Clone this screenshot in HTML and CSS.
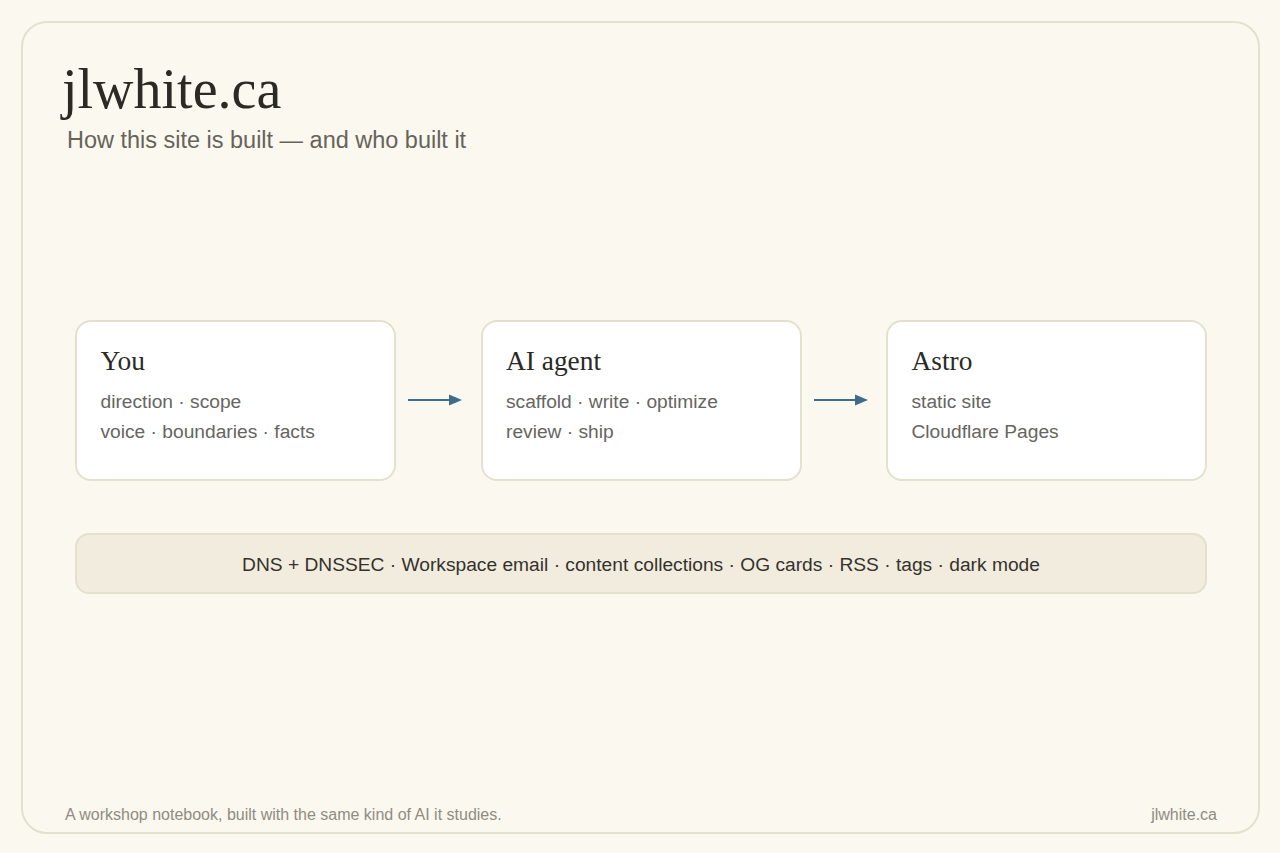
FILE: index.html
```html
<!DOCTYPE html>
<html lang="en">
<head>
  <meta charset="UTF-8" />
  <meta name="viewport" content="width=device-width, initial-scale=1" />
  <title>jlwhite.ca</title>
  <link rel="stylesheet" href="styles.css">
</head>
<body>

  <div class="frame">
    <header>
      <h1>jlwhite.ca</h1>
      <p class="subtitle">How this site is built — and who built it</p>
    </header>

    <div class="flow">
      <div class="card">
        <h2>You</h2>
        <p>direction · scope</p>
        <p>voice · boundaries · facts</p>
      </div>

      <svg class="arrow" viewBox="0 0 54 12" width="54" height="12" aria-hidden="true">
        <path d="M0 6H42" stroke="#3f6b8f" stroke-width="2" fill="none" />
        <path d="M41 0.5L54 6L41 11.5Z" fill="#3f6b8f" />
      </svg>

      <div class="card">
        <h2>AI agent</h2>
        <p>scaffold · write · optimize</p>
        <p>review · ship</p>
      </div>

      <svg class="arrow" viewBox="0 0 54 12" width="54" height="12" aria-hidden="true">
        <path d="M0 6H42" stroke="#3f6b8f" stroke-width="2" fill="none" />
        <path d="M41 0.5L54 6L41 11.5Z" fill="#3f6b8f" />
      </svg>

      <div class="card">
        <h2>Astro</h2>
        <p>static site</p>
        <p>Cloudflare Pages</p>
      </div>
    </div>

    <div class="strip">DNS + DNSSEC · Workspace email · content collections · OG cards · RSS · tags · dark mode</div>

    <footer>
      <span>A workshop notebook, built with the same kind of AI it studies.</span>
      <span>jlwhite.ca</span>
    </footer>
  </div>

</body>
</html>
```

FILE: styles.css
```css
html, body {
  height: 100%;
}

body {
  margin: 0;
  padding: 21px 20px 19px 21px;
  box-sizing: border-box;
  background: #fbf8ef;
  font-family: "Liberation Sans", Arial, sans-serif;
}

.frame {
  height: 100%;
  box-sizing: border-box;
  display: flex;
  flex-direction: column;
  border: 2px solid #e4e0cd;
  border-radius: 26px;
  padding: 0 41px 7px 42px;
}

header {
  padding-top: 34px;
  height: 262px;
  box-sizing: border-box;
}

h1 {
  margin: 0 0 0 -3px;
  font-family: "Liberation Serif", Georgia, serif;
  font-weight: 400;
  font-size: 56px;
  line-height: 64px;
  color: #2b2a25;
}

.subtitle {
  margin: 5px 0 0 2px;
  font-size: 23.47px;
  line-height: 28px;
  color: #66635b;
}

.flow {
  display: flex;
  align-items: center;
  justify-content: space-between;
  margin: 35px 10px 0 10px;
}

.card {
  width: 321px;
  height: 161px;
  box-sizing: border-box;
  background: #fff;
  border: 2px solid #e4e0cd;
  border-radius: 16px;
  padding: 23px 24px 0 23.5px;
}

.card h2 {
  margin: 0 0 10px;
  font-family: "Liberation Serif", Georgia, serif;
  font-weight: 400;
  font-size: 27.4px;
  line-height: 32px;
  color: #2b2a25;
}

.card p {
  margin: 0;
  font-size: 19.2px;
  line-height: 30px;
  color: #666561;
}

.arrow {
  flex: none;
  margin: 0 6px 2px 0;
}

.strip {
  margin: 52px 10px 0 10px;
  height: 61px;
  padding-top: 2px;
  box-sizing: border-box;
  display: flex;
  align-items: center;
  justify-content: center;
  background: #f2ecdf;
  border: 2px solid #e4e0cd;
  border-radius: 14px;
  font-size: 19.2px;
  color: #34322c;
}

footer {
  margin-top: auto;
  display: flex;
  justify-content: space-between;
  font-size: 16px;
  line-height: 20px;
  color: #8f8c82;
}
```
